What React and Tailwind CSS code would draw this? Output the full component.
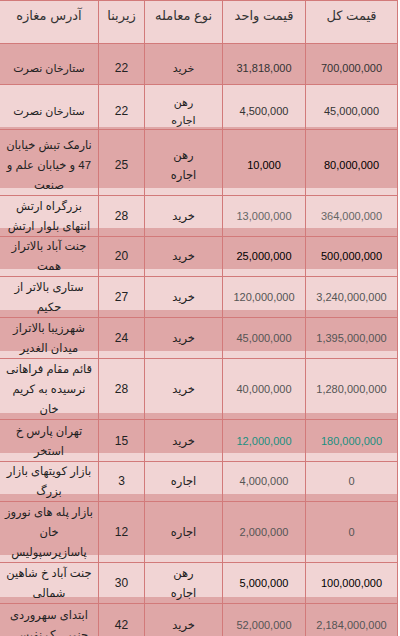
import React from 'react';

const rows = [
    { addr: ['ستارخان نصرت'], area: '22', type: ['خرید'], unit: '31,818,000', total: '700,000,000', small: true, h: 'h-[41px]', dark: true, num: 'text-[#333]' },
    { addr: ['ستارخان نصرت'], area: '22', type: ['رهن', 'اجاره'], unit: '4,500,000', total: '45,000,000', small: true, h: 'h-[42px]', dark: false, num: 'text-[#333]' },
    { addr: ['نارمک تبش خیابان', '47 و خیابان علم و', 'صنعت'], area: '25', type: ['رهن', 'اجاره'], unit: '10,000', total: '80,000,000', h: 'h-[61px]', dark: true, num: 'text-black' },
    { addr: ['بزرگراه ارتش', 'انتهای بلوار ارتش'], area: '28', type: ['خرید'], unit: '13,000,000', total: '364,000,000', h: 'h-[40px]', dark: false, num: 'text-[#666]' },
    { addr: ['جنت آباد بالاتراز', 'همت'], area: '20', type: ['خرید'], unit: '25,000,000', total: '500,000,000', h: 'h-[41px]', dark: true, num: 'text-black' },
    { addr: ['ستاری بالاتر از', 'حکیم'], area: '27', type: ['خرید'], unit: '120,000,000', total: '3,240,000,000', h: 'h-[41px]', dark: false, num: 'text-[#555]' },
    { addr: ['شهرزیبا بالاتراز', 'میدان الغدیر'], area: '24', type: ['خرید'], unit: '45,000,000', total: '1,395,000,000', h: 'h-[41px]', dark: true, num: 'text-[#555]' },
    { addr: ['قائم مقام فراهانی', 'نرسیده به کریم', 'خان'], area: '28', type: ['خرید'], unit: '40,000,000', total: '1,280,000,000', h: 'h-[62px]', dark: false, num: 'text-[#555]' },
    { addr: ['تهران پارس خ', 'استخر'], area: '15', type: ['خرید'], unit: '12,000,000', total: '180,000,000', h: 'h-[40px]', dark: true, num: 'text-[#1a8f80]' },
    { addr: ['بازار کویتهای بازار', 'بزرگ'], area: '3', type: ['اجاره'], unit: '4,000,000', total: '0', h: 'h-[41px]', dark: false, num: 'text-[#555]' },
    { addr: ['بازار پله های نوروز', 'خان', 'پاسازپرسپولیس'], area: '12', type: ['اجاره'], unit: '2,000,000', total: '0', h: 'h-[61px]', dark: true, num: 'text-[#555]' },
    { addr: ['جنت آباد خ شاهین', 'شمالی'], area: '30', type: ['رهن', 'اجاره'], unit: '5,000,000', total: '100,000,000', h: 'h-[42px]', dark: false, num: 'text-black' },
    { addr: ['ابتدای سهروردی', 'جنوبی ک نفیسی'], area: '42', type: ['خرید'], unit: '52,000,000', total: '2,184,000,000', h: 'h-[41px]', dark: true, num: 'text-[#555]' },
];

const headers = ['آدرس مغازه', 'زیربنا', 'نوع معامله', 'قیمت واحد', 'قیمت کل'];

const Cell = ({ children, className = '' }) => (
    <div className={`flex items-center justify-center text-center border-r border-b border-[#d27a7a] pt-[8px] ${className}`}>
        {children}
    </div>
);

const Lines = ({ lines, small }) => (
    <div dir="rtl" className={`whitespace-nowrap ${small ? 'text-[11px] leading-[18px]' : 'text-[11.5px] leading-[20px]'}`}>
        {lines.map((l, i) => (
            <div key={i}>{l}</div>
        ))}
    </div>
);

export default function App() {
    return (
        <div className="bg-white min-h-[636px] font-['Liberation_Sans','DejaVu_Sans',sans-serif] text-[#222]">
            <div className="w-[398px] border-t border-[#d27a7a]">
                <div className="grid grid-cols-[99px_46px_78px_83px_92px] h-[43px] bg-[#f1d4d4]">
                    {headers.map((h) => (
                        <div key={h} dir="rtl" className="flex justify-center pt-[5px] text-[13px] leading-[20px] text-[#333] border-r border-b border-[#d27a7a]">
                            {h}
                        </div>
                    ))}
                </div>
                {rows.map((r, i) => (
                    <div key={i} className={`grid grid-cols-[99px_46px_78px_83px_92px] ${r.h} ${r.dark ? 'bg-[#dfa7a7]' : 'bg-[#f1d4d4]'}`}>
                        <Cell><Lines lines={r.addr} small={r.small} /></Cell>
                        <Cell className="text-[12px]">{r.area}</Cell>
                        <Cell><Lines lines={r.type} small={r.small} /></Cell>
                        <Cell className={`text-[11px] ${r.num}`}>{r.unit}</Cell>
                        <Cell className={`text-[11px] ${r.num}`}>{r.total}</Cell>
                    </div>
                ))}
            </div>
        </div>
    );
}
